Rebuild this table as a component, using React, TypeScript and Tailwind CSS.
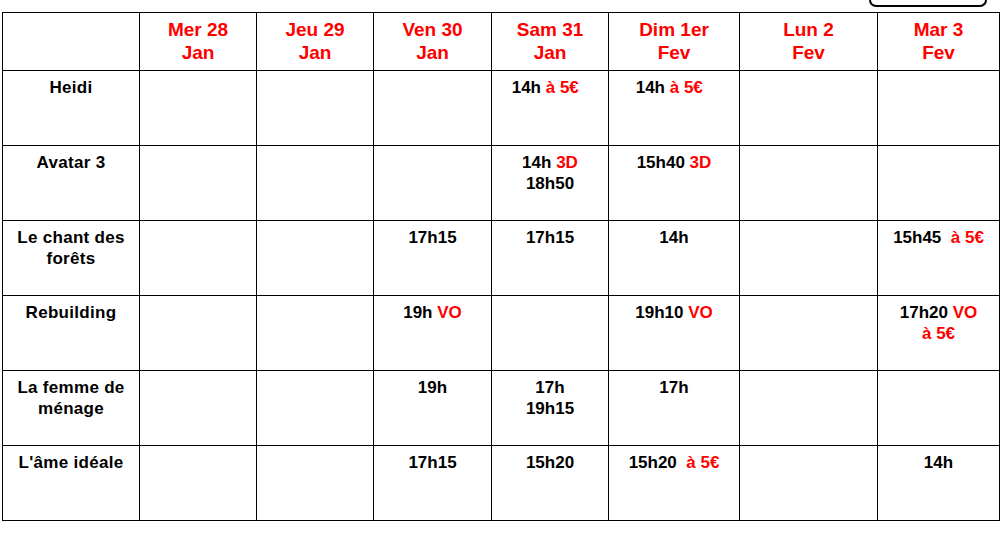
type Line = [string, string?];
type Cell = Line[];

const days = [
  ["Mer 28", "Jan"],
  ["Jeu 29", "Jan"],
  ["Ven 30", "Jan"],
  ["Sam 31", "Jan"],
  ["Dim 1er", "Fev"],
  ["Lun 2", "Fev"],
  ["Mar 3", "Fev"],
];

const films: { title: string[]; cells: Cell[] }[] = [
  {
    title: ["Heidi"],
    cells: [[], [], [], [["14h ", "à 5€\u00a0\u00a0"]], [["14h ", "à 5€\u00a0\u00a0"]], [], []],
  },
  {
    title: ["Avatar 3"],
    cells: [[], [], [], [["14h ", "3D"], ["18h50"]], [["15h40 ", "3D"]], [], []],
  },
  {
    title: ["Le chant des", "forêts"],
    cells: [[], [], [["17h15"]], [["17h15"]], [["14h"]], [], [["15h45\u00a0 ", "à 5€"]]],
  },
  {
    title: ["Rebuilding"],
    cells: [[], [], [["19h ", "VO"]], [], [["19h10 ", "VO"]], [], [["17h20 ", "VO"], ["", "à 5€"]]],
  },
  {
    title: ["La femme de", "ménage"],
    cells: [[], [], [["19h"]], [["17h"], ["19h15"]], [["17h"]], [], []],
  },
  {
    title: ["L'âme idéale"],
    cells: [[], [], [["17h15"]], [["15h20"]], [["15h20\u00a0 ", "à 5€"]], [], [["14h"]]],
  },
];

export default function App() {
  return (
    <div
      className="w-[1006px] h-[536px] bg-white overflow-hidden"
      style={{ fontFamily: '"Liberation Sans", Arial, sans-serif' }}
    >
      {/* bouton coupé en haut */}
      <div className="flex pl-[869px]">
        <div className="w-[118px] h-[7px] border-2 border-t-0 border-black rounded-b-[8px]" />
      </div>

      <div className="mt-[5px] ml-[2px] w-[998px] grid grid-cols-[136px_116px_116px_117px_116px_130px_137px_121px] grid-rows-[57px_repeat(6,74px)] gap-px p-px bg-black font-bold">
        <div className="bg-white" />
        {days.map((d) => (
          <div
            key={d[0]}
            className="bg-white pt-[5px] text-center text-[19px] leading-[23px] text-[#ff0000]"
          >
            {d[0]}
            <br />
            {d[1]}
          </div>
        ))}

        {films.map((f) => (
          <>
            <div
              key={f.title[0]}
              className="bg-white pt-[6px] text-center text-[17px] leading-[21px] tracking-[0.3px] text-black"
            >
              {f.title.map((t) => (
                <div key={t}>{t}</div>
              ))}
            </div>
            {f.cells.map((c, i) => (
              <div
                key={f.title[0] + i}
                className="bg-white pt-[6px] text-center text-[17px] leading-[21px] text-black whitespace-pre"
              >
                {c.map((l, j) => (
                  <div key={j}>
                    {l[0]}
                    {l[1] && <span className="text-[#ff0000]">{l[1]}</span>}
                  </div>
                ))}
              </div>
            ))}
          </>
        ))}
      </div>
    </div>
  );
}
